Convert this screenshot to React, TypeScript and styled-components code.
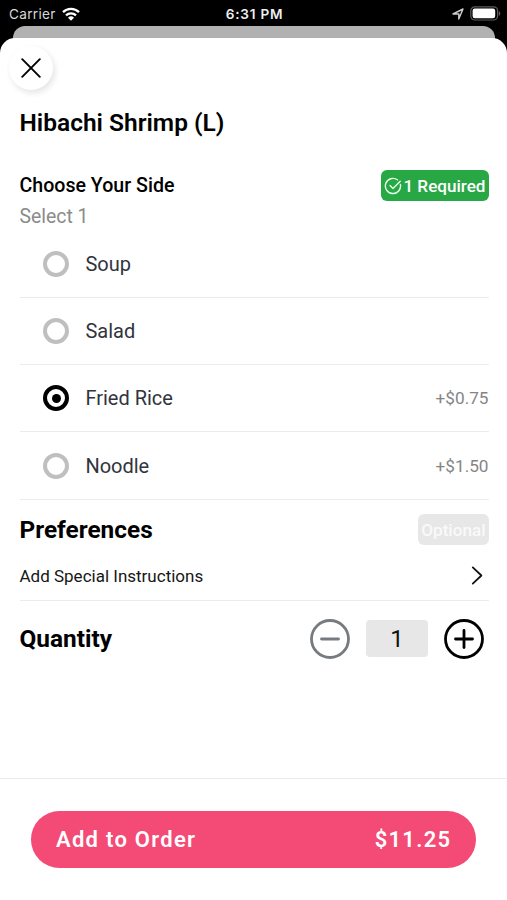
import React, { useState } from "react";
import styled, { createGlobalStyle } from "styled-components";

const GlobalStyle = createGlobalStyle`
  * { box-sizing: border-box; }
  body { margin: 0; background: #000; font-family: Roboto, sans-serif; }
  button { font: inherit; border: 0; padding: 0; background: none; color: inherit; cursor: pointer; }
  h1, h2, h3, p { margin: 0; }
  svg { display: block; flex: none; }
`;

const Screen = styled.div`
  width: 507px;
  height: 900px;
  display: flex;
  flex-direction: column;
  background: #000;
  overflow: hidden;
`;

const StatusBar = styled.header`
  height: 25px;
  flex: none;
  display: grid;
  grid-template-columns: 1fr auto 1fr;
  align-items: center;
  padding: 2px 6px 0 9px;
  font-family: Inter, sans-serif;
  color: #fff;
`;

const Carrier = styled.div`
  display: flex;
  align-items: center;
  gap: 6px;
  font-size: 13.6px;
  letter-spacing: 0.3px;
  color: #d8d8d8;
`;

const Clock = styled.div`
  font-size: 13.6px;
  font-weight: 600;
  letter-spacing: 0.75px;
  margin-left: -1px;
  color: #eee;
`;

const Indicators = styled.div`
  display: flex;
  align-items: center;
  justify-content: flex-end;
  gap: 6px;
`;

const BackCard = styled.div`
  flex: none;
  height: 28px;
  margin: 0.5px 12px -16px 13px;
  border-radius: 12px 12px 0 0;
  background: #b1b1b1;
`;

const Sheet = styled.main`
  position: relative;
  flex: 1;
  display: flex;
  flex-direction: column;
  background: #fff;
  border-radius: 15px 15px 0 0;
`;

const Body = styled.div`
  flex: 1;
  padding: 8.5px 18.5px 0 19.5px;
`;

const CloseButton = styled.button`
  width: 44px;
  height: 44px;
  margin-left: -10.5px;
  border-radius: 50%;
  display: grid;
  place-items: center;
  background: #fff;
  box-shadow: 2px 3px 6px rgba(0, 0, 0, 0.11);
`;

const Title = styled.h1`
  margin-top: 19px;
  font-size: 24.5px;
  line-height: 28px;
  font-weight: 600;
`;

const SectionHead = styled.div<{ $top: number }>`
  display: flex;
  align-items: center;
  justify-content: space-between;
  height: 31px;
  margin-top: ${(p) => p.$top}px;
`;

const GroupTitle = styled.h3`
  font-size: 19.6px;
  font-weight: 500;
`;

const Heading = styled.h2`
  font-size: 24.4px;
  font-weight: 700;
`;

const Badge = styled.span<{ $optional?: boolean }>`
  height: 31px;
  display: flex;
  align-items: center;
  padding: 0 3px;
  gap: 1px;
  border-radius: 6px;
  color: ${(p) => (p.$optional ? "#f9f9f9" : "#fff")};
  background: ${(p) => (p.$optional ? "#e7e7e7" : "#28a745")};
  font-size: 17.1px;
  font-weight: 500;
`;

const Hint = styled.p`
  height: 29.6px;
  line-height: 31px;
  font-size: 19.4px;
  color: #8b8b8b;
`;

const Option = styled.label`
  height: 67.3px;
  display: flex;
  align-items: center;
  padding: 0 0 0 23.5px;
  border-bottom: 1.5px solid #ececec;
  font-size: 20px;
  color: #31343c;
  cursor: pointer;
`;

const HiddenRadio = styled.input`
  appearance: none;
  width: 0;
  height: 0;
  margin: 0;
`;

const Dial = styled.span<{ $on: boolean }>`
  width: 26px;
  height: 26px;
  display: grid;
  place-items: center;
  border: 4px solid ${(p) => (p.$on ? "#000" : "#bfbfbf")};
  border-radius: 50%;
  margin-right: 16.4px;

  &::after {
    content: "";
    width: 9px;
    height: 9px;
    border-radius: 50%;
    background: ${(p) => (p.$on ? "#000" : "transparent")};
  }
`;

const Surcharge = styled.span`
  margin-left: auto;
  font-size: 17.2px;
  color: #858585;
`;

const InstructionRow = styled.button`
  width: 100%;
  height: 56px;
  display: flex;
  align-items: center;
  justify-content: space-between;
  padding: 5.5px 6px 0 0;
  border-bottom: 1.5px solid #ececec;
  font-size: 17px;
  color: #161616;
`;

const QuantityRow = styled.div`
  height: 75px;
  display: flex;
  align-items: center;
  justify-content: space-between;
  padding-right: 4.5px;
`;

const Stepper = styled.div`
  display: flex;
  align-items: center;
  gap: 16px;
`;

const RoundButton = styled.button<{ $muted?: boolean }>`
  color: ${(p) => (p.$muted ? "#777b80" : "#000")};
`;

const Count = styled.output`
  width: 62px;
  height: 37px;
  display: grid;
  place-items: center;
  border-radius: 4px;
  background: #e7e7e7;
  font-size: 24px;
  color: #111;
`;

const Footer = styled.footer`
  height: 122px;
  border-top: 1.5px solid #ececec;
  padding: 31.5px 31px 0;
`;

const OrderButton = styled.button`
  width: 445px;
  height: 57px;
  display: flex;
  align-items: center;
  justify-content: space-between;
  padding: 0 24.6px 0 25px;
  border-radius: 29px;
  background: #f44a76;
  color: #fff;
  font-size: 22px;
  font-weight: 600;
  letter-spacing: 1.27px;
`;

const WifiIcon = () => (
  <svg width="18" height="14" viewBox="0 0 18 14" fill="none" stroke="#fff" strokeWidth="2.3">
    <path d="M1 5.1a11.4 11.4 0 0 1 16 0" />
    <path d="M4 8.3a7.2 7.2 0 0 1 10 0" />
    <path d="M9 13.7 6 10.7a4.3 4.3 0 0 1 6 0Z" fill="#fff" stroke="none" />
  </svg>
);

const LocationIcon = () => (
  <svg width="12" height="12" viewBox="0 0 12 12" fill="none" stroke="#ccc" strokeWidth="1.4" strokeLinejoin="round">
    <path d="M1 6 11 1 6.8 11V6Z" />
  </svg>
);

const BatteryIcon = () => (
  <svg width="31" height="15" viewBox="0 0 31 15">
    <rect x="0.8" y="0.8" width="26.8" height="13.2" rx="4" fill="none" stroke="#5c5c5f" strokeWidth="1.2" />
    <rect x="2.6" y="2.6" width="22.6" height="9.6" rx="2.2" fill="#fff" />
    <path d="M28.8 5v5c2-.8 2-4.2 0-5Z" fill="#5c5c5f" />
  </svg>
);

const CloseIcon = () => (
  <svg width="20" height="20" viewBox="0 0 20 20" stroke="#000" strokeWidth="1.9" strokeLinecap="round">
    <path d="m1.2 1.2 17.6 17.6M18.8 1.2 1.2 18.8" />
  </svg>
);

const CheckIcon = () => (
  <svg width="18" height="18" viewBox="0 0 18 18" fill="none" stroke="#e6ffec" strokeWidth="1.4" strokeLinecap="round" strokeLinejoin="round">
    <path d="M16.4 7.4A7.6 7.6 0 1 1 13.4 2.8" />
    <path d="m6 8.4 3 3 7.2-7.2" />
  </svg>
);

const ChevronIcon = () => (
  <svg width="12" height="19" viewBox="0 0 12 19" fill="none" stroke="#111" strokeWidth="1.8" strokeLinecap="round" strokeLinejoin="round">
    <path d="m1.8 1.4 8.6 8.1-8.6 8.1" />
  </svg>
);

const StepIcon = ({ plus }: { plus?: boolean }) => (
  <svg width="40" height="40" viewBox="0 0 40 40" fill="none" stroke="currentColor" strokeWidth="2.8">
    <circle cx="20" cy="20" r="18.5" />
    <path d="M11.5 20h17" strokeLinecap="round" />
    {plus && <path d="M20 11.5v17" strokeLinecap="round" />}
  </svg>
);

const sides = [
  { name: "Soup" },
  { name: "Salad" },
  { name: "Fried Rice", extra: "+$0.75" },
  { name: "Noodle", extra: "+$1.50" },
];

export default function App() {
  const [side, setSide] = useState("Fried Rice");
  const [count, setCount] = useState(1);

  return (
    <Screen>
      <GlobalStyle />
      <StatusBar>
        <Carrier>Carrier <WifiIcon /></Carrier>
        <Clock>6:31 PM</Clock>
        <Indicators><LocationIcon /><BatteryIcon /></Indicators>
      </StatusBar>
      <BackCard />
      <Sheet>
        <Body>
          <CloseButton aria-label="Close"><CloseIcon /></CloseButton>
          <Title>Hibachi Shrimp (L)</Title>
          <SectionHead $top={33}>
            <GroupTitle>Choose Your Side</GroupTitle>
            <Badge><CheckIcon />1 Required</Badge>
          </SectionHead>
          <Hint>Select 1</Hint>
          {sides.map((s) => (
            <Option key={s.name}>
              <HiddenRadio type="radio" name="side" checked={side === s.name} onChange={() => setSide(s.name)} />
              <Dial $on={side === s.name} />
              {s.name}
              {s.extra && <Surcharge>{s.extra}</Surcharge>}
            </Option>
          ))}
          <SectionHead $top={14.7}>
            <Heading>Preferences</Heading>
            <Badge $optional>Optional</Badge>
          </SectionHead>
          <InstructionRow>Add Special Instructions<ChevronIcon /></InstructionRow>
          <QuantityRow>
            <Heading>Quantity</Heading>
            <Stepper>
              <RoundButton $muted aria-label="Decrease" onClick={() => setCount(Math.max(1, count - 1))}><StepIcon /></RoundButton>
              <Count>{count}</Count>
              <RoundButton aria-label="Increase" onClick={() => setCount(count + 1)}><StepIcon plus /></RoundButton>
            </Stepper>
          </QuantityRow>
        </Body>
        <Footer>
          <OrderButton><span>Add to Order</span><span>${(11.25 * count).toFixed(2)}</span></OrderButton>
        </Footer>
      </Sheet>
    </Screen>
  );
}
